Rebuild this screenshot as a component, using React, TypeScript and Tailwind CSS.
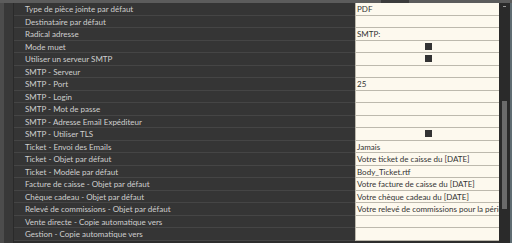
import React from "react"

type Row = { label: string; value?: string; check?: boolean }

const rows: Row[] = [
  { label: "Type de pièce jointe par défaut", value: "PDF" },
  { label: "Destinataire par défaut" },
  { label: "Radical adresse", value: "SMTP:" },
  { label: "Mode muet", check: true },
  { label: "Utiliser un serveur SMTP", check: true },
  { label: "SMTP - Serveur" },
  { label: "SMTP - Port", value: "25" },
  { label: "SMTP - Login" },
  { label: "SMTP - Mot de passe" },
  { label: "SMTP - Adresse Email Expéditeur" },
  { label: "SMTP - Utiliser TLS", check: true },
  { label: "Ticket - Envoi des Emails", value: "Jamais" },
  { label: "Ticket - Objet par défaut", value: "Votre ticket de caisse du [DATE]" },
  { label: "Ticket - Modèle par défaut", value: "Body_Ticket.rtf" },
  { label: "Facture de caisse - Objet par défaut", value: "Votre facture de caisse du [DATE]" },
  { label: "Chèque cadeau - Objet par défaut", value: "Votre chèque cadeau du [DATE]" },
  { label: "Relevé de commissions - Objet par défaut", value: "Votre relevé de commissions pour la période" },
  { label: "Vente directe - Copie automatique vers" },
  { label: "Gestion - Copie automatique vers" },
]

export default function App() {
  return (
    <div
      className="w-[512px] h-[243px] overflow-hidden bg-[#2d2d2d] flex flex-col text-[8px]"
      style={{ fontFamily: 'Lato, "Noto Sans", sans-serif' }}
    >
      {/* header strip */}
      <div className="h-[3px] shrink-0 flex bg-[#5a5a5a]">
        <div className="w-[381px] bg-[#5c5c5c]" />
        <div className="w-[28px] bg-[#3c3c3c]" />
        <div className="flex-1 bg-[#5c5c5c]" />
      </div>
      <div className="flex flex-1 min-h-0">
        <div className="w-[4px] bg-[#4c4c4c]" />
        <div className="w-[10px] bg-[#383838] border-r border-[#2a2a2a]" />
        <div className="w-[485px] flex flex-col">
          {rows.map((r, i) => (
            <div key={i} className="h-[12.5px] shrink-0 flex leading-[13.5px]">
              <div className="flex-1 pl-[11px] bg-[#353535] border-b border-[#454545] text-[#cfcfcf] whitespace-nowrap overflow-hidden">
                {r.label}
              </div>
              <div className="w-[144px] flex pl-[1px] bg-[#fdf9ee] border-b border-l border-[#bdb9ad] text-[#333] whitespace-nowrap overflow-hidden">
                {r.check ? (
                  <div className="mx-auto mt-[2px] w-[7px] h-[7px] bg-[#333]" />
                ) : (
                  r.value
                )}
              </div>
            </div>
          ))}
        </div>
        {/* scrollbar */}
        <div className="flex-1 flex bg-[#2a2a2a]">
          <div className="w-[2px]" />
          <div className="w-[6px] flex flex-col items-center">
            <div className="mt-[3px] w-[3px] h-[1px] bg-[#9a9a9a]" />
            <div className="mt-[94px] w-[5px] h-[108px] bg-[#6b6b6b]" />
          </div>
          <div className="flex-1" />
          <div className="w-[2px] bg-[#5f6c72]" />
        </div>
      </div>
    </div>
  )
}
